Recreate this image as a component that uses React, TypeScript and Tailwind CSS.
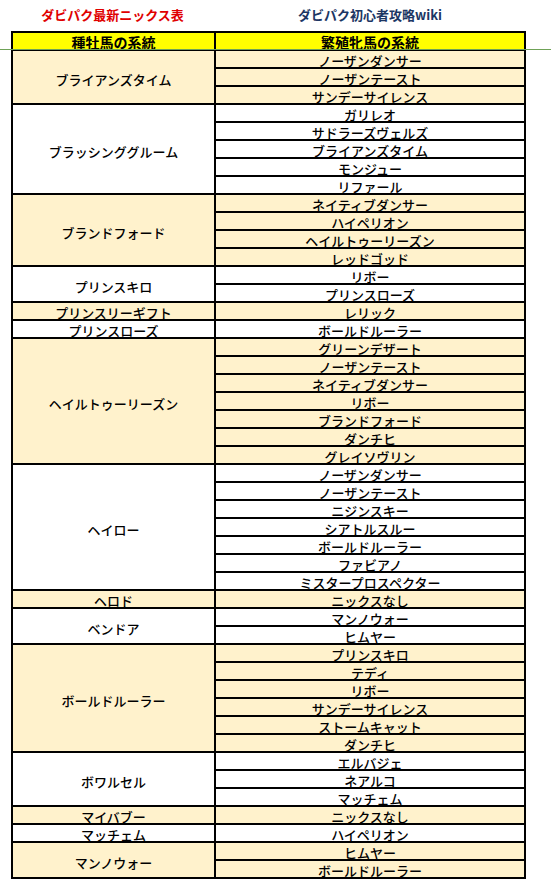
import React from "react";

type Group = { name: string; items: string[] };

const groups: Group[] = [
  { name: "ブライアンズタイム", items: ["ノーザンダンサー", "ノーザンテースト", "サンデーサイレンス"] },
  { name: "ブラッシンググルーム", items: ["ガリレオ", "サドラーズヴェルズ", "ブライアンズタイム", "モンジュー", "リファール"] },
  { name: "ブランドフォード", items: ["ネイティブダンサー", "ハイペリオン", "ヘイルトゥーリーズン", "レッドゴッド"] },
  { name: "プリンスキロ", items: ["リボー", "プリンスローズ"] },
  { name: "プリンスリーギフト", items: ["レリック"] },
  { name: "プリンスローズ", items: ["ボールドルーラー"] },
  { name: "ヘイルトゥーリーズン", items: ["グリーンデザート", "ノーザンテースト", "ネイティブダンサー", "リボー", "ブランドフォード", "ダンチヒ", "グレイソヴリン"] },
  { name: "ヘイロー", items: ["ノーザンダンサー", "ノーザンテースト", "ニジンスキー", "シアトルスルー", "ボールドルーラー", "ファビアノ", "ミスタープロスペクター"] },
  { name: "ヘロド", items: ["ニックスなし"] },
  { name: "ベンドア", items: ["マンノウォー", "ヒムヤー"] },
  { name: "ボールドルーラー", items: ["プリンスキロ", "テディ", "リボー", "サンデーサイレンス", "ストームキャット", "ダンチヒ"] },
  { name: "ボワルセル", items: ["エルバジェ", "ネアルコ", "マッチェム"] },
  { name: "マイバブー", items: ["ニックスなし"] },
  { name: "マッチェム", items: ["ハイペリオン"] },
  { name: "マンノウォー", items: ["ヒムヤー", "ボールドルーラー"] },
];

const font = { fontFamily: '"Noto Sans CJK JP", "Noto Sans", sans-serif' };

export default function App() {
  return (
    <div className="relative w-[551px] h-[879px] bg-white overflow-hidden text-black font-medium" style={font}>
      {/* titles */}
      <div className="flex ml-[11px] w-[515px] h-[31px] pt-[7px]">
        <div className="w-[203px] text-center text-[13px] leading-[16px] font-bold text-[#e00000]">ダビパク最新ニックス表</div>
        <div className="w-[312px] text-center text-[13px] leading-[16px] font-bold text-[#1c3664]">ダビパク初心者攻略wiki</div>
      </div>

      {/* table */}
      <div className="ml-[11px] w-[515px] border-2 border-black">
        <div className="flex h-[18px] border-b-2 border-black bg-[#ffff00]">
          <div className="w-[203px] border-r-2 border-black text-center text-[14px] font-bold leading-[14px] pt-[2px]">種牡馬の系統</div>
          <div className="flex-1 text-center text-[14px] font-bold leading-[14px] pt-[2px]">繁殖牝馬の系統</div>
        </div>
        {groups.map((g, gi) => (
          <div
            key={gi}
            className={`flex ${gi % 2 === 0 ? "bg-[#fff2cc]" : "bg-white"} ${gi < groups.length - 1 ? "border-b-2 border-black" : ""}`}
          >
            <div
              className={`w-[203px] border-r-2 border-black flex items-center justify-center text-[13px] leading-[13px] ${g.items.length > 1 ? "pt-[5px]" : "pt-[3px]"}`}
            >
              {g.name}
            </div>
            <div className="flex-1 flex flex-col">
              {g.items.map((it, ii) => (
                <div
                  key={ii}
                  className={`h-[16px] text-center text-[13px] leading-[13px] pt-[3px] ${ii < g.items.length - 1 ? "h-[18px] border-b-2 border-black" : ""}`}
                >
                  {it}
                </div>
              ))}
            </div>
          </div>
        ))}
      </div>

      {/* overlaid green line */}
      <div className="absolute left-0 top-[49px] w-full h-px bg-[#6fa257]" />
    </div>
  );
}
